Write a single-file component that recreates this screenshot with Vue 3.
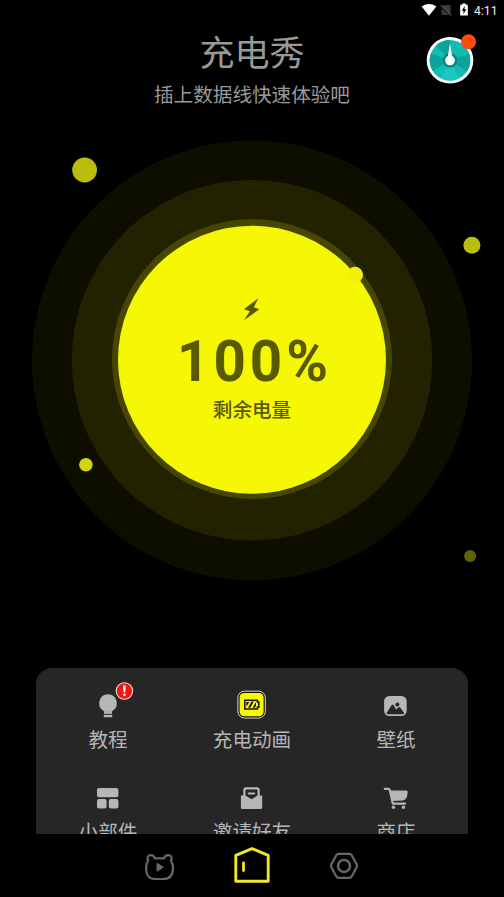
<script setup>
const rings = [
  { cy: 360.6, r: 220, fill: '#0e0e00' },
  { cy: 360.2, r: 180.3, fill: '#232200' },
  { cy: 359, r: 140, fill: '#474600' },
  { cy: 359.8, r: 134, fill: '#f5f704' },
]
const dots = [
  { cx: 84.6, cy: 170, r: 12.4, fill: '#bcbc0b' },
  { cx: 471.9, cy: 245.2, r: 8.5, fill: '#bcbc0b' },
  { cx: 355, cy: 274.8, r: 8, fill: '#eff00b' },
  { cx: 85.9, cy: 464.8, r: 6.8, fill: '#d3d30c' },
  { cx: 470.1, cy: 556, r: 6, fill: '#626205' },
]
const items = [
  { icon: 'bulb', label: '教程' },
  { icon: 'battery', label: '充电动画' },
  { icon: 'image', label: '壁纸' },
  { icon: 'widget', label: '小部件' },
  { icon: 'invite', label: '邀请好友' },
  { icon: 'cart', label: '商店' },
]
</script>

<template>
  <div class="screen">
    <div class="status">
      <svg class="signals" width="52" height="20" viewBox="0 0 52 20">
        <path d="M1.6 6.4Q9 1.6 16.4 6.4L9 15.8Z" fill="#fff" />
        <path d="M21.5 6.5L30.5 14.5V5H25Z M21.5 8V15H29.5Z" fill="#3b3b3b" />
        <path d="M21 4.8L31.3 15.4" stroke="#555" stroke-width="1.2" />
        <path d="M40.2 4.7H42.3V3.4H45.7V4.7H47.8V15.6H40.2Z" fill="#fff" />
        <path d="M44.8 5.7L41.8 10.7H43.6L43.2 14.3L46.4 9.2H44.5Z" fill="#000" />
      </svg>
      <span class="clock">4:11</span>
    </div>

    <header class="head">
      <h1>充电秀</h1>
      <p>插上数据线快速体验吧</p>
      <svg class="gauge" width="54" height="54" viewBox="0 0 54 54">
        <circle cx="26" cy="28.3" r="23.3" fill="#fff" />
        <circle cx="26" cy="28.3" r="20.3" fill="#13bcb2" />
        <path d="M26 28.3L12 13.6A20.3 20.3 0 0 1 26 8Z M26 28.3L45.2 21.6A20.3 20.3 0 0 1 42.8 39.8Z M26 28.3L8.8 39A20.3 20.3 0 0 1 6.8 21.6Z" fill="#0ba39b" />
        <path d="M26 28.3L35 46.5A20.3 20.3 0 0 1 17 46.5Z" fill="#19c9bd" />
        <circle cx="26" cy="28.3" r="7.3" fill="#08857f" />
        <path d="M26 11.5L28.1 24A4.9 4.9 0 1 1 23.9 24Z" fill="#fff" />
        <circle cx="44.5" cy="9.8" r="7.5" fill="#ff4b0b" />
      </svg>
    </header>

    <main class="stage">
      <svg class="orbits" width="504" height="548" viewBox="0 120 504 548">
        <circle v-for="(c, i) in rings" :key="'r' + i" cx="252" :cy="c.cy" :r="c.r" :fill="c.fill" />
        <circle v-for="(d, i) in dots" :key="'d' + i" :cx="d.cx" :cy="d.cy" :r="d.r" :fill="d.fill" />
      </svg>
      <div class="level">
        <svg width="18" height="24" viewBox="0 0 18 24">
          <path d="M15.2 1.4L.9 12.3L6.8 14.2L1 23.2L16.4 12.3L10.9 10.3Z" fill="#5a5900" />
        </svg>
        <strong>100%</strong>
        <span>剩余电量</span>
      </div>
    </main>

    <section class="panel">
      <div v-for="item in items" :key="item.icon" class="item">
        <svg v-if="item.icon === 'bulb'" class="icon" width="60" height="34" viewBox="0 0 60 34">
          <path d="M30 8.3A8.9 8.9 0 0 1 34.2 25V25.8H25.8V25A8.9 8.9 0 0 1 30 8.3Z M25.8 27.8H34.2V31.2H25.8Z" fill="#b6b6b6" />
          <path d="M26 25.2H34V28.6H26Z" fill="#b6b6b6" />
          <path d="M25.8 28.3H34.2" stroke="#262626" stroke-width="1" />
          <circle cx="46.4" cy="5" r="8.2" fill="#f51310" stroke="#f5d9d9" stroke-width="1.1" />
          <path d="M45 -.4H47.8L47.3 6.2H45.5Z" fill="#fff" />
          <circle cx="46.4" cy="8.8" r="1.4" fill="#fff" />
        </svg>
        <svg v-else-if="item.icon === 'battery'" class="icon" width="60" height="34" viewBox="0 0 60 34">
          <rect x="15.9" y="5.2" width="27.4" height="26.8" rx="6.5" fill="#111100" stroke="#deded0" stroke-width="1" />
          <rect x="17.6" y="6.9" width="24" height="23.4" rx="4.5" fill="#f8fb00" />
          <path d="M22.8 14.3H35.4V16H36.8V21.3H35.4V23H22.8Z" fill="none" stroke="#171700" stroke-width="1.5" />
          <path d="M24.3 20.6V16H27.3Z M26 21.8L29.6 15.6H31.8L28.2 21.8Z M30.6 21.8L34 16V19.5L32.8 21.8Z" fill="#171700" />
        </svg>
        <svg v-else-if="item.icon === 'image'" class="icon" width="60" height="34" viewBox="0 0 60 34">
          <rect x="18.1" y="9.9" width="22.6" height="20" rx="5.2" fill="#b6b6b6" />
          <path d="M20.5 27.3L25.5 19.2Q26.4 17.9 27.4 19.1L30.2 23.4L32.4 21.4Q33.4 20.5 34.4 21.7L38.4 27.3Q37.7 28.2 36.2 28.2H22.4Q21 28.2 20.5 27.3Z" fill="#262626" />
          <circle cx="31.3" cy="18.5" r="2" fill="#262626" />
        </svg>
        <svg v-else-if="item.icon === 'widget'" class="icon" width="60" height="34" viewBox="0 0 60 34">
          <g fill="#b6b6b6">
            <rect x="19" y="9.9" width="21.4" height="9.4" rx="2" />
            <rect x="19" y="21" width="9.6" height="9.4" rx="2" />
            <rect x="30.8" y="21" width="9.6" height="9.4" rx="2" />
          </g>
        </svg>
        <svg v-else-if="item.icon === 'invite'" class="icon" width="60" height="34" viewBox="0 0 60 34">
          <path d="M18.9 17.6H21.3V12Q21.3 9.3 24 9.3H35Q37.7 9.3 37.7 12V17.6H40.2V29.5Q40.2 31 38.7 31H20.4Q18.9 31 18.9 29.5Z" fill="#b6b6b6" />
          <path d="M23.5 17.5V12.5Q23.5 11.5 24.5 11.5H34.5Q35.5 11.5 35.5 12.5V17.5L29.5 21.3Z" fill="#262626" />
          <path d="M26.7 15.5H32.3" stroke="#b6b6b6" stroke-width="1.9" stroke-linecap="round" />
        </svg>
        <svg v-else class="icon" width="60" height="34" viewBox="0 0 60 34">
          <path d="M18.7 10.9H22.2Q23.5 10.9 23.8 12.2L26.7 25.6H39.2" fill="none" stroke="#b6b6b6" stroke-width="2.1" stroke-linecap="round" stroke-linejoin="round" />
          <path d="M23.7 12.4H40.4Q41.8 12.4 41.7 13.9Q41.3 21.9 37 22.5L26.2 23.1Z" fill="#b6b6b6" />
          <circle cx="27.5" cy="29.2" r="1.7" fill="#b6b6b6" />
          <circle cx="37.4" cy="29.2" r="1.7" fill="#b6b6b6" />
        </svg>
        <span class="label">{{ item.label }}</span>
      </div>
    </section>

    <nav class="tabs">
      <svg width="32" height="32" viewBox="0 0 32 32">
        <path d="M10.8 8.4H20.2C20.6 6.2 22.2 5.1 24.6 5.1C27.4 5.1 28.3 8.2 26.9 10.6C28.5 12.8 29 15.2 29 18C29 25.6 26.2 29 19.6 29H11.4C4.8 29 2.1 25.6 2.1 18C2.1 15.2 2.6 12.8 4.2 10.6C2.8 8.2 3.7 5.1 6.5 5.1C8.9 5.1 10.4 6.2 10.8 8.4Z" fill="none" stroke="#676767" stroke-width="2.2" stroke-linejoin="round" />
        <path d="M13.4 14L18.6 17.3L13.4 20.6Z" fill="#676767" stroke="#676767" stroke-width="1.8" stroke-linejoin="round" />
      </svg>
      <svg width="40" height="40" viewBox="0 0 40 40">
        <path d="M3.8 9.3L20 2.6L36.2 9.3V35.2H3.8Z" fill="none" stroke="#efe52d" stroke-width="2.9" stroke-linejoin="round" />
        <path d="M11.5 16.8V24.6" stroke="#efe52d" stroke-width="2.8" stroke-linecap="round" />
      </svg>
      <svg width="32" height="32" viewBox="0 0 32 32">
        <path d="M10.6 3.9H21.4Q22.9 3.9 23.7 5.2L28.7 14.4Q29.3 15.7 28.7 17L23.7 26.4Q22.9 27.8 21.4 27.8H10.6Q9.1 27.8 8.3 26.4L3.3 17Q2.7 15.7 3.3 14.4L8.3 5.2Q9.1 3.9 10.6 3.9Z" fill="none" stroke="#676767" stroke-width="2.2" />
        <circle cx="16" cy="15.9" r="6" fill="none" stroke="#676767" stroke-width="2.5" />
      </svg>
    </nav>
  </div>
</template>

<style>
body {
  background: #000;
}
</style>

<style scoped>
.screen {
  display: flex;
  flex-direction: column;
  width: 504px;
  height: 897px;
  overflow: hidden;
  background: #000;
  font-family: Roboto, "Noto Sans CJK SC", sans-serif;
}
.status {
  display: flex;
  justify-content: flex-end;
  align-items: center;
  flex: none;
  height: 20px;
  padding-right: 7px;
}
.signals {
  margin-right: 2px;
}
.clock {
  width: 23px;
  color: #eee;
  font-size: 12.2px;
  line-height: 20px;
  white-space: nowrap;
  padding-top: 1px;
}
.head {
  position: relative;
  flex: none;
  height: 100px;
  color: #999;
  text-align: center;
}
.head h1 {
  margin: 0;
  padding-top: 10px;
  font-size: 35px;
  font-weight: 400;
  line-height: 50px;
}
.head p {
  margin: 0;
  padding-top: 1px;
  font-size: 19.6px;
  line-height: 30px;
}
.gauge {
  position: absolute;
  top: 12px;
  right: 26px;
}
.stage {
  display: grid;
  flex: none;
  height: 548px;
}
.orbits,
.level {
  grid-area: 1 / 1;
}
.level {
  display: flex;
  flex-direction: column;
  align-items: center;
  padding-top: 177px;
  color: #5a5900;
}
.level strong {
  margin-top: 8px;
  padding-left: 5px;
  font-size: 56.5px;
  font-weight: 700;
  line-height: 66px;
  letter-spacing: 4px;
}
.level span {
  margin-top: 1px;
  font-size: 19.6px;
  font-weight: 500;
  line-height: 30px;
}
.panel {
  display: grid;
  grid-template-columns: repeat(3, 1fr);
  grid-auto-rows: 92px;
  flex: none;
  height: 166px;
  margin: 0 36px;
  padding-top: 18px;
  box-sizing: border-box;
  overflow: hidden;
  border-radius: 16px 16px 0 0;
  background: #262626;
}
.item {
  display: flex;
  flex-direction: column;
  align-items: center;
}
.icon {
  flex: none;
  overflow: visible;
}
.label {
  margin-top: 6px;
  color: #b6b6b6;
  font-size: 19.6px;
  line-height: 30px;
}
.tabs {
  display: flex;
  justify-content: center;
  align-items: center;
  gap: 56px;
  flex: 1;
}
</style>
